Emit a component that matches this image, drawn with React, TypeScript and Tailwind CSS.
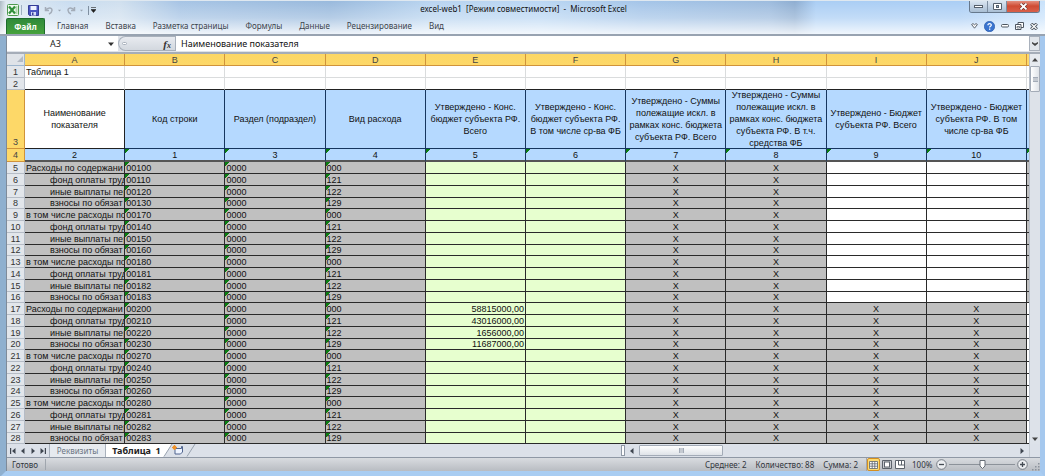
import React from "react";

const letters = ["A", "B", "C", "D", "E", "F", "G", "H", "I", "J"];

const headings = [
  "Наименование показателя",
  "Код строки",
  "Раздел (подраздел)",
  "Вид расхода",
  "Утверждено - Конс. бюджет субъекта РФ. Всего",
  "Утверждено - Конс. бюджет субъекта РФ. В том числе ср-ва ФБ",
  "Утверждено - Суммы полежащие искл. в рамках конс. бюджета субъекта РФ. Всего",
  "Утверждено - Суммы полежащие искл. в рамках конс. бюджета субъекта РФ. В т.ч. средства ФБ",
  "Утверждено - Бюджет субъекта РФ. Всего",
  "Утверждено - Бюджет субъекта РФ. В том числе ср-ва ФБ",
];

const numbers = ["2", "1", "3", "4", "5", "6", "7", "8", "9", "10"];

const codes = [
  "00100", "00110", "00120", "00130", "00170", "00140", "00150", "00160",
  "00180", "00181", "00182", "00183", "00200", "00210", "00220", "00230",
  "00270", "00240", "00250", "00260", "00280", "00281", "00282", "00283",
];

const kinds = ["000", "121", "122", "129"];

const amounts: Record<string, string> = {
  "00200": "58815000,00",
  "00210": "43016000,00",
  "00220": "1656000,00",
  "00230": "11687000,00",
};

function rowName(i: number) {
  const k = i % 4;
  if (k === 1) return "фонд оплаты труд";
  if (k === 2) return "иные выплаты пер";
  if (k === 3) return "взносы по обязат";
  return i % 12 === 0 ? "Расходы по содержани" : "в том числе расходы по";
}

const menu = ["Главная", "Вставка", "Разметка страницы", "Формулы", "Данные", "Рецензирование", "Вид"];

const mark = "bg-[linear-gradient(135deg,#0a7d12_3px,transparent_3px)]";
const grid = "border-r border-b border-[#dadcdd] p-0";
const cell = "border-r border-b border-[#2a2a2a] p-0 leading-[10px] overflow-hidden whitespace-nowrap";
const head = "border-r border-b border-[#16365f] bg-[#b5d9ff] p-0 text-center";

function ExcelLogo() {
  return (
    <svg className="size-[12px]" viewBox="0 0 12 12" aria-hidden="true">
      <rect x="0.5" y="0.5" width="11" height="11" rx="1" fill="#f2faf0" stroke="#4f9a50" />
      <path d="M8.500 3h2M8.500 5h2M8.500 7h2M8.500 9h2" stroke="#6fb26a" strokeWidth="1" />
      <path d="M2 2.500l6 7M8 2.500l-6 7" stroke="#2f8f3a" strokeWidth="2.200" />
    </svg>
  );
}

function SaveIcon() {
  return (
    <svg className="size-[11px]" viewBox="0 0 11 11" aria-hidden="true">
      <path d="M.5.5h10v10h-9l-1-1z" fill="#4a55c0" stroke="#343c96" />
      <rect x="2.500" y="1" width="6" height="4" fill="#eef2ff" />
      <rect x="3" y="7" width="5" height="3.500" fill="#d5dbf5" />
      <rect x="4" y="7.500" width="1.500" height="2.500" fill="#343c96" />
    </svg>
  );
}

function CurveArrow({ flip }: { flip?: boolean }) {
  return (
    <svg className={flip ? "h-[9px] w-[10px] -scale-x-100" : "h-[9px] w-[10px]"} viewBox="0 0 10 9" aria-hidden="true">
      <path d="M1.500 1v3.500H5M1.800 4.200C3.500 1.500 8 1 8 4.300 8 6.300 6.500 7.300 5 8.200" fill="none" stroke="#a3acb8" strokeWidth="1.500" />
    </svg>
  );
}

function Triangle({ d, className }: { d: string; className?: string }) {
  return (
    <svg className={className ?? "size-[6px]"} viewBox="0 0 6 6" aria-hidden="true">
      <path d={d} fill="currentColor" />
    </svg>
  );
}

const DOWN = "M0 1.500h6L3 5z";
const UP = "M0 4.500h6L3 1z";
const LEFT = "M4.500 0v6L1 3z";
const RIGHT = "M1.500 0v6L5 3z";

function TitleBar() {
  return (
    <header className="flex h-[18px] shrink-0 items-stretch">
      <div className="flex flex-1 items-center pl-[7px] pt-[2px]">
        <ExcelLogo />
        <span className="mx-[2px] h-[10px] w-px bg-[#9fb0c2]" />
        <button aria-label="Сохранить" className="ml-[4px]"><SaveIcon /></button>
        <button aria-label="Отменить" className="ml-[5px] flex items-center gap-[4px] text-[#9aa5b2]">
          <CurveArrow />
          <Triangle d={DOWN} className="size-[3px]" />
        </button>
        <button aria-label="Вернуть" className="ml-[5px] flex items-center gap-[4px] text-[#9aa5b2]">
          <CurveArrow flip />
          <Triangle d={DOWN} className="size-[3px]" />
        </button>
        <span className="ml-[5px] h-[9px] w-px bg-[#7f8fa0]" />
        <button aria-label="Настройка панели" className="ml-[2px] text-[#222]">
          <svg className="h-[6px] w-[5px]" viewBox="0 0 5 6" aria-hidden="true"><path d="M0 .5h5M0 2.500h5L2.500 5.500z" fill="currentColor" stroke="currentColor" strokeWidth=".6" /></svg>
        </button>
      </div>
      <h1 className="whitespace-pre pt-[3px] text-[8px] leading-[12px] text-[#111]">excel-web1  [Режим совместимости]  -  Microsoft Excel</h1>
      <div className="flex flex-1 items-start justify-end pr-[5px]">
        <div className="flex h-[13px] overflow-hidden rounded-b-[3px] border border-t-0 border-[#66788c]">
          <button aria-label="Свернуть" className="flex w-[18px] items-center justify-center border-r border-[#7d8ea1] bg-linear-to-b from-[#dfe9f3] to-[#a9bed4]">
            <svg className="h-[3px] w-[9px]" viewBox="0 0 9 3" aria-hidden="true"><rect x=".5" y=".5" width="8" height="2" fill="#fff" stroke="#555f6b" /></svg>
          </button>
          <button aria-label="Развернуть" className="flex w-[19px] items-center justify-center border-r border-[#7d8ea1] bg-linear-to-b from-[#dfe9f3] to-[#a9bed4]">
            <svg className="h-[7px] w-[9px]" viewBox="0 0 9 7" aria-hidden="true"><path d="M.5.5h8v6h-8z" fill="#fff" stroke="#555f6b" /><rect x="3.500" y="2.500" width="2" height="2" fill="#a9bed4" stroke="#555f6b" /></svg>
          </button>
          <button aria-label="Закрыть" className="flex w-[32px] items-center justify-center bg-linear-to-b from-[#e69b8c] via-[#cf4b33] to-[#d9604a]">
            <svg className="h-[7px] w-[9px]" viewBox="0 0 9 7" aria-hidden="true"><path d="M1.500.5l6 6M7.500.5l-6 6" stroke="#5b2a24" strokeWidth="3" /><path d="M1.500.5l6 6M7.500.5l-6 6" stroke="#fff" strokeWidth="1.800" /></svg>
          </button>
        </div>
      </div>
    </header>
  );
}

function Ribbon() {
  return (
    <nav className="flex h-[18px] shrink-0 items-end border-b-2 border-[#98a3b1] pr-[7px] pl-[6px]">
      <button className="h-[16px] w-[39px] rounded-t-[2px] border border-b-0 border-[#1d6b2b] bg-linear-to-b from-[#2f8a3a] to-[#46a23c] text-[8px] leading-[14px] font-bold text-white">Файл</button>
      <div className="ml-[12px] flex flex-1 gap-[17px]">
        {menu.map((m) => (
          <button key={m} className="h-[16px] text-[8px] leading-[16px] whitespace-nowrap text-[#3c434c]">{m}</button>
        ))}
      </div>
      <div className="flex h-[16px] items-center gap-[6px] text-[#4d5661]">
        <button aria-label="Свернуть ленту">
          <svg className="h-[6px] w-[7px]" viewBox="0 0 7 6" aria-hidden="true"><path d="M.6 1.500 2 .6l1.500 1.200L5 .6l1.400.9-2.900 3.700z" fill="#fff" stroke="currentColor" strokeWidth=".9" /></svg>
        </button>
        <button aria-label="Справка">
          <svg className="size-[11px]" viewBox="0 0 11 11" aria-hidden="true"><circle cx="5.500" cy="5.500" r="5.200" fill="#3a74cf" stroke="#2556a5" strokeWidth=".6" /><path d="M3.900 4.200c0-2.200 3.400-2 3.400-.2 0 1.300-1.700 1.300-1.700 2.600" fill="none" stroke="#fff" strokeWidth="1.200" /><rect x="5" y="7.500" width="1.300" height="1.300" fill="#fff" /></svg>
        </button>
        <button aria-label="Свернуть окно">
          <svg className="h-[4px] w-[8px]" viewBox="0 0 8 4" aria-hidden="true"><rect x=".5" y=".5" width="7" height="2.500" rx="1" fill="#fff" stroke="currentColor" /></svg>
        </button>
        <button aria-label="Восстановить окно">
          <svg className="h-[8px] w-[9px]" viewBox="0 0 9 8" aria-hidden="true"><path d="M3 .5h5.500v5H3z" fill="#fff" stroke="currentColor" /><path d="M.5 2.500H6v5H.5z" fill="#fff" stroke="currentColor" /><path d="M2 4.500h2.500v1.500H2z" fill="none" stroke="currentColor" strokeWidth=".7" /></svg>
        </button>
        <button aria-label="Закрыть окно">
          <svg className="h-[7px] w-[8px]" viewBox="0 0 8 7" aria-hidden="true"><path d="M1.200.7l5.600 5.600M6.800.7L1.200 6.300" stroke="currentColor" strokeWidth="3.200" /><path d="M1.500 1l5 5M6.500 1l-5 5" stroke="#fff" strokeWidth="1.200" /></svg>
        </button>
      </div>
    </nav>
  );
}

function FormulaBar() {
  return (
    <div className="flex h-[18px] shrink-0 border-b-2 border-[#a5adb8] bg-[#dfe3e9] pb-px">
      <input aria-label="Имя ячейки" defaultValue="A3" className="w-[97px] bg-white text-center text-[9px] text-[#222] outline-none" />
      <button aria-label="Список имён" className="flex w-[14px] items-center justify-center bg-white text-[#333]">
        <Triangle d={DOWN} />
      </button>
      <div className="flex w-[57px] items-center justify-between rounded-l-full border border-r-0 border-[#a9b1bc] bg-linear-to-b from-[#e8ebf0] to-[#d3d8df] pr-[4px] pl-[3px]">
        <span className="h-[3px] w-[5px] rounded-full border border-[#a9b1bc] bg-white" />
        <button aria-label="Вставить функцию" className="font-['Liberation_Serif',serif] text-[11px] leading-[12px] font-bold text-[#333] italic">
          f<sub className="bottom-0 text-[8px]">x</sub>
        </button>
      </div>
      <input aria-label="Строка формул" defaultValue="Наименование показателя" className="min-w-0 flex-1 border-l border-[#a9b1bc] bg-white pl-[5px] text-[9px] text-[#111] outline-none" />
      <button aria-label="Развернуть строку формул" className="flex w-[11px] items-center justify-center border border-[#a9b1bc] bg-[#e2e6eb] text-[#444]">
        <Triangle d="M0 1l3 1.500L6 1v1.500L3 5 0 2.500z" />
      </button>
    </div>
  );
}

function Sheet() {
  return (
    <table className="w-full table-fixed border-separate border-spacing-0 bg-white font-['Liberation_Sans',Arial,sans-serif] text-[9px] text-[#111]">
      <colgroup>
        <col className="w-[18px]" />
        {letters.map((l) => <col key={l} />)}
        <col className="w-[2px]" />
      </colgroup>
      <thead>
        <tr className="h-[12px]">
          <th className="border-r border-b border-[#9eb6ce] bg-[#dfe3e8] p-0">
            <svg className="ml-auto h-[7px] w-[7px]" viewBox="0 0 7 7" aria-hidden="true"><path d="M6 0v6H0z" fill="#b3bac4" /></svg>
          </th>
          {letters.map((l) => (
            <th key={l} scope="col" className="border-r border-b border-[#d0933a] bg-linear-to-b from-[#fcd765] to-[#fdd868] p-0 leading-[10px] font-normal text-[#444]">{l}</th>
          ))}
          <th className="border-b border-[#d0933a] bg-[#fdd868] p-0" />
        </tr>
      </thead>
      <tbody>
        {["Таблица 1", ""].map((t, i) => (
          <tr key={i} className="h-[12px]">
            <RowHead n={i + 1} />
            {letters.map((l, c) => (
              <td key={l} className={i === 1 ? "border-r border-b border-r-[#dadcdd] border-b-[#222] p-0 leading-[10px]" : `${grid} pl-px leading-[10px] whitespace-nowrap`}>{c === 0 ? t : ""}</td>
            ))}
            <td className={i === 1 ? "border-b border-[#222] p-0" : "border-b border-[#dadcdd] p-0"} />
          </tr>
        ))}
        <tr className="h-[59px]">
          <RowHead n={3} active />
          {headings.map((h, c) => (
            <td key={h} className={c === 0 ? "border-r border-b border-[#222] bg-white p-0 text-center" : head}>
              <div className={c === 0 ? "flex h-[58px] items-center justify-center px-[16px] leading-[12px]" : "flex h-[58px] items-center justify-center px-px leading-[12px]"}>{h}</div>
            </td>
          ))}
          <td className="border-b border-[#16365f] bg-[#b5d9ff] p-0" />
        </tr>
        <tr className="h-[13px]">
          <RowHead n={4} active />
          {numbers.map((n, c) => (
            <td key={n} className={c === 0 ? "border-r border-b-2 border-r-[#16365f] border-b-[#555] bg-[#b5d9ff] p-0 text-center leading-[10px]" : `border-r border-b-2 border-r-[#16365f] border-b-[#555] bg-[#b5d9ff] p-0 text-center leading-[10px] ${mark}`}>{n}</td>
          ))}
          <td className={`border-b-2 border-[#555] bg-[#b5d9ff] p-0 ${mark}`} />
        </tr>
        {codes.map((code, i) => {
          const upper = i < 12;
          return (
            <tr key={code} className={i % 4 === 3 ? "h-[11px]" : "h-[12px]"}>
              <RowHead n={i + 5} />
              <td className={i % 4 === 0 ? `${cell} bg-[#c0c0c0] pl-px` : `${cell} bg-[#c0c0c0] pl-[25px]`}>{rowName(i)}</td>
              <td className={`${cell} bg-[#c0c0c0] pl-px ${mark}`}>{code}</td>
              <td className={`${cell} bg-[#c0c0c0] pl-px ${mark}`}>0000</td>
              <td className={`${cell} bg-[#c0c0c0] pl-px ${mark}`}>{kinds[i % 4]}</td>
              <td className={`${cell} bg-[#e7ffcf] pr-px text-right`}>{amounts[code] ?? ""}</td>
              <td className={`${cell} bg-[#e7ffcf]`} />
              <td className={`${cell} bg-[#c0c0c0] text-center`}>X</td>
              <td className={`${cell} bg-[#c0c0c0] text-center`}>X</td>
              <td className={upper ? `${cell} bg-white` : `${cell} bg-[#c0c0c0] text-center`}>{upper ? "" : "X"}</td>
              <td className={upper ? `${cell} bg-white` : `${cell} bg-[#c0c0c0] text-center`}>{upper ? "" : "X"}</td>
              <td className={upper ? "border-b border-[#2a2a2a] bg-[#c0c0c0] p-0" : "border-b border-[#2a2a2a] bg-white p-0"} />
            </tr>
          );
        })}
      </tbody>
    </table>
  );
}

function RowHead({ n, active }: { n: number; active?: boolean }) {
  return (
    <th
      scope="row"
      className={
        active
          ? "border-r border-b border-[#d0933a] bg-[#fdd868] p-0 text-center align-bottom leading-[11px] font-normal text-[#444]"
          : "border-r border-b border-[#b5bcc6] bg-[#e2e6eb] p-0 text-center leading-[10px] font-normal text-[#333]"
      }
    >
      {n}
    </th>
  );
}

function VerticalScroll() {
  return (
    <div className="flex w-[11px] shrink-0 flex-col border-l border-[#b9c0ca] bg-[#dde2e9] text-[#444]">
      <button aria-label="Вверх" className="flex h-[12px] items-center justify-center bg-[#e6eaef]"><Triangle d={UP} /></button>
      <div className="flex h-[26px] items-center justify-center rounded-[1px] border border-[#a3abb7] bg-linear-to-r from-white to-[#dfe3e8]">
        <span className="size-[5px] border-y border-[#a3abb7] bg-[#c5cad1]" />
      </div>
      <div className="flex-1" />
      <button aria-label="Вниз" className="flex h-[10px] items-center justify-center"><Triangle d={DOWN} /></button>
    </div>
  );
}

function SheetTabs() {
  return (
    <div className="flex h-[14px] shrink-0 items-stretch border-b border-[#8f98a5] bg-[#dce1e9] text-[#3f4650]">
      <div className="flex w-[42px] items-center justify-around px-px">
        <button aria-label="Первый лист"><Triangle d="M0 0h1.200v6H0zM5.500 0v6L2 3z" /></button>
        <button aria-label="Предыдущий лист"><Triangle d={LEFT} /></button>
        <button aria-label="Следующий лист"><Triangle d={RIGHT} /></button>
        <button aria-label="Последний лист"><Triangle d="M4.800 0H6v6H4.800zM.5 0v6L4 3z" /></button>
      </div>
      <button className="w-[57px] border-x border-[#a9b1bc] bg-[#e6eaef] text-[8px] leading-[12px] whitespace-nowrap text-[#6a7482]">Реквизиты</button>
      <button className="w-[57px] bg-white pl-[4px] text-[9px] leading-[12px] font-bold whitespace-pre text-[#222]">Таблица  1</button>
      <button aria-label="Вставить лист">
        <svg className="h-[13px] w-[34px]" viewBox="0 0 34 13" aria-hidden="true">
          <path d="M0 0h9L1 12.500H0z" fill="#fff" />
          <path d="M9 0 1 12.500" stroke="#98a2af" />
          <path d="M32 0 24 12.500" stroke="#98a2af" />
          <path d="M12 4.500h6.500v-2h1v5.500l-2 2h-5.500z" fill="#eef4ff" stroke="#50658f" />
          <path d="M11.500 1v5M9 3.500h5M10 2l3 3M13 2l-3 3" stroke="#f0922a" strokeWidth="1.100" />
        </svg>
      </button>
      <div className="flex-1" />
      <div className="flex w-[419px] items-stretch">
        <span className="my-px w-[4px] border border-[#8f98a5] bg-white" />
        <button aria-label="Влево" className="flex w-[14px] items-center justify-center"><Triangle d={LEFT} /></button>
        <div className="my-px flex w-[84px] items-center justify-center rounded-[1px] border border-[#a3abb7] bg-linear-to-b from-white to-[#dfe3e8]">
          <span className="size-[5px] border-x border-[#a3abb7] bg-[#c5cad1]" />
        </div>
        <div className="flex-1" />
        <button aria-label="Вправо" className="flex w-[14px] items-center justify-center"><Triangle d={RIGHT} /></button>
        <span className="w-[11px] border-l border-[#c3c9d1]" />
      </div>
    </div>
  );
}

function StatusBar() {
  return (
    <footer className="flex h-[13px] shrink-0 items-center bg-linear-to-b from-[#d9dce0] to-[#b8bcc2] text-[8px] leading-[12px] text-[#30353c]">
      <span className="w-[38px] pl-[5px]">Готово</span>
      <span className="h-[11px] w-px bg-[#a0a6ae]" />
      <div className="flex-1" />
      <div className="flex gap-[9px] whitespace-nowrap">
        <span>Среднее: 2</span>
        <span>Количество: 88</span>
        <span>Сумма: 2</span>
      </div>
      <div className="ml-[8px] flex items-center border-l border-[#a0a6ae] text-[#5b626b]">
        <button aria-label="Обычный" className="flex h-[13px] w-[13px] items-center justify-center rounded-[2px] border border-[#d58f1f] bg-[#fddc72]">
          <svg className="h-[8px] w-[9px]" viewBox="0 0 9 8" aria-hidden="true"><path d="M.5.5h8v7h-8zM3.200.5v7M5.800.5v7M.5 2.800h8M.5 5.200h8" fill="#fff" stroke="currentColor" strokeWidth=".8" /></svg>
        </button>
        <button aria-label="Разметка страницы" className="flex w-[13px] justify-center">
          <svg className="h-[9px] w-[10px]" viewBox="0 0 10 9" aria-hidden="true"><path d="M.5.5h9v8h-9z" fill="#c9ccd1" stroke="currentColor" /><rect x="2.500" y="2" width="5" height="5" fill="#fff" stroke="currentColor" /></svg>
        </button>
        <button aria-label="Страничный" className="flex w-[13px] justify-center">
          <svg className="h-[9px] w-[10px]" viewBox="0 0 10 9" aria-hidden="true"><path d="M.5.5h9v8h-9z" fill="#fff" stroke="currentColor" /><path d="M3.500.5v4.500M6.500.5v4.500M3.500 5h6" fill="none" stroke="currentColor" /></svg>
        </button>
      </div>
      <span className="ml-[6px] w-[24px]">100%</span>
      <ZoomButton label="Уменьшить" d="M3 5.500h5" />
      <div className="relative mx-[2px] flex w-[66px] items-center">
        <input type="range" aria-label="Масштаб" defaultValue={50} className="peer h-[11px] w-full appearance-none bg-transparent opacity-0" />
        <svg className="pointer-events-none absolute inset-0 h-[11px] w-full" viewBox="0 0 66 11" aria-hidden="true"><path d="M0 5.500h66" stroke="#8c929a" /><path d="M31 1.500h5v5.500L33.500 9.500 31 7z" fill="#fff" stroke="#666d76" /></svg>
      </div>
      <ZoomButton label="Увеличить" d="M3 5.500h5M5.500 3v5" />
      <svg className="ml-[4px] h-[9px] w-[8px] self-end" viewBox="0 0 8 9" aria-hidden="true"><path d="M6 1h1.500v1.500H6zM6 4h1.500v1.500H6zM6 7h1.500v1.500H6zM3 4h1.500v1.500H3zM3 7h1.500v1.500H3zM0 7h1.500v1.500H0z" fill="#8b929c" /></svg>
    </footer>
  );
}

function ZoomButton({ label, d }: { label: string; d: string }) {
  return (
    <button aria-label={label}>
      <svg className="size-[11px]" viewBox="0 0 11 11" aria-hidden="true"><circle cx="5.500" cy="5.500" r="4.800" fill="#eceef1" stroke="#6c737c" strokeWidth=".9" /><path d={d} stroke="#444b54" strokeWidth="1.300" /></svg>
    </button>
  );
}

export default function App() {
  return (
    <div className="flex min-h-screen flex-col overflow-hidden border-t border-[#dfe8f0] bg-[linear-gradient(90deg,#a9b8c2_0px,#dfe9f2_6px,#c8dcf0_70px,#cfdfee_120px,#a5c3e4_180px,#97b8dc_330px,#b7d3ef_430px,#b9d6f3_540px,#a3c4e8_640px,#9bbadd_770px,#8cacd0_795px,#a9cdf4_816px,#a9cdf5_960px,#c9e2fb_100%)] font-['Noto_Sans','Open_Sans',sans-serif]">
      <div className="-mt-px bg-linear-to-b from-white/0 via-white/30 to-white/90">
        <TitleBar />
        <Ribbon />
      </div>
      <div className="flex flex-1 flex-col border-x-[6px] border-r-[5px] border-b-[6px] border-l-[#8fb0cf] border-r-[#a5c8ee] border-b-[#a9cdf2]">
        <div className="flex flex-1 flex-col border-l border-[#7f8b99] bg-[#dce1e9]">
          <FormulaBar />
          <div className="flex flex-1 items-stretch">
            <div className="min-w-0 flex-1"><Sheet /></div>
            <VerticalScroll />
          </div>
          <SheetTabs />
          <StatusBar />
        </div>
      </div>
    </div>
  );
}
